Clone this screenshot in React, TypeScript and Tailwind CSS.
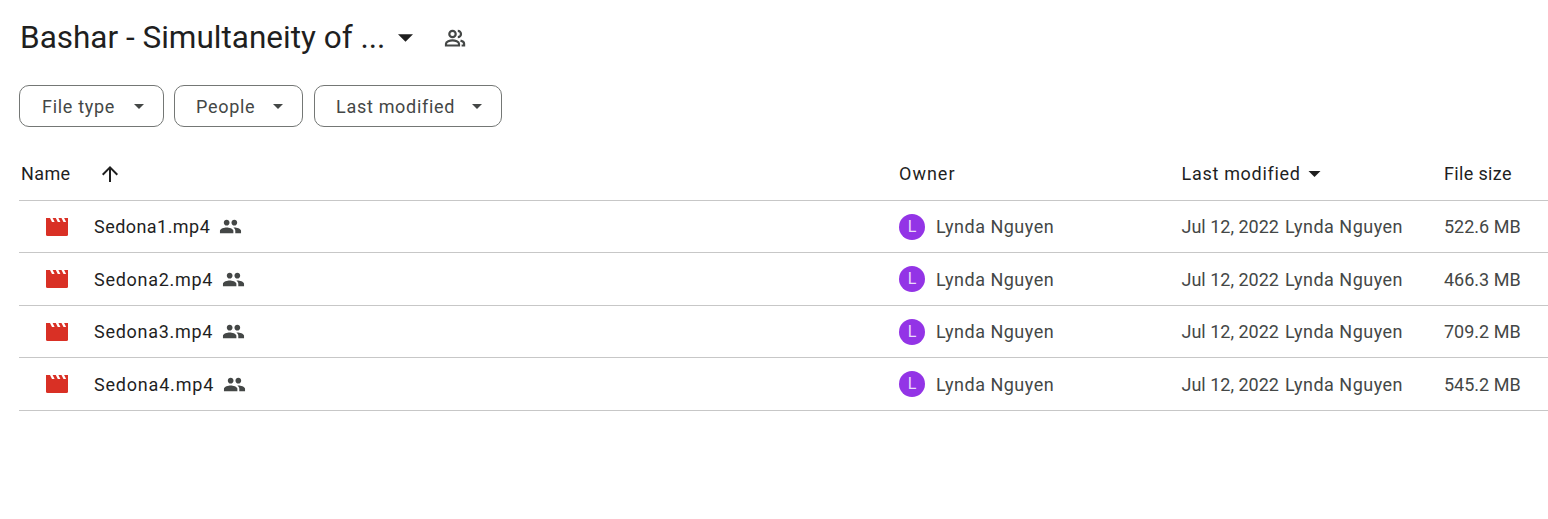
const files = [
  { name: "Sedona1.mp4", size: "522.6 MB", nameBox: "w-[116px] tracking-[0.45px]", rowHeight: "h-[52px]" },
  { name: "Sedona2.mp4", size: "466.3 MB", nameBox: "w-[119px] tracking-[0.72px]", rowHeight: "h-[53px]" },
  { name: "Sedona3.mp4", size: "709.2 MB", nameBox: "w-[119px] tracking-[0.72px]", rowHeight: "h-[52px]" },
  { name: "Sedona4.mp4", size: "545.2 MB", nameBox: "w-[120px] tracking-[0.8px]", rowHeight: "h-[53px]" },
];

const chips = [
  { label: "File type", box: "w-[145px] pl-[22px]" },
  { label: "People", box: "w-[129px] pl-[21px]" },
  { label: "Last modified", box: "w-[188px] pl-[21px]" },
];

function Caret({ className }: { className: string }) {
  return (
    <svg viewBox="0 0 12 6" className={className} fill="currentColor">
      <path d="M0 0h12L6 6z" />
    </svg>
  );
}

function SharedIcon() {
  return (
    <svg viewBox="0 0 24 24" className="w-[23px] h-[23px] text-[#444746] ml-[9px]" fill="currentColor">
      <path d="M16 11c1.66 0 2.99-1.34 2.99-3S17.66 5 16 5s-3 1.34-3 3 1.34 3 3 3zm-8 0c1.66 0 2.99-1.34 2.99-3S9.66 5 8 5 5 6.34 5 8s1.34 3 3 3zm0 2c-2.33 0-7 1.17-7 3.5V19h14v-2.5C15 14.17 10.33 13 8 13zm8 0c-.29 0-.62.02-.97.05 1.16.84 1.97 1.97 1.97 3.45V19h6v-2.5c0-2.33-4.67-3.5-7-3.5z" />
    </svg>
  );
}

function OutlinePeople() {
  return (
    <svg viewBox="0 0 24 24" className="w-[24px] h-[24px] text-[#444746]" fill="none" stroke="currentColor" strokeWidth="2.2">
      <circle cx="9.500" cy="8" r="3.200" />
      <path d="M3 19.500v-1.800c0-2 3.800-3.400 6.500-3.400s6.500 1.400 6.500 3.400v1.800z" />
      <path d="M14.800 4.800a3.200 3.200 0 0 1 0 6.400" />
      <path d="M17.500 14.600c2 .5 3.600 1.500 3.600 3.100v1.800h-2.500" />
    </svg>
  );
}

function VideoIcon() {
  return (
    <svg viewBox="0 0 22 18" className="w-[22px] h-[18px]">
      <path fill="#d93025" d="M0 0h22v16.500a1.500 1.500 0 0 1-1.500 1.500h-19A1.500 1.500 0 0 1 0 16.500z" />
      <path fill="#ffffff" d="M4 0h2.600l2 4H6zM9.800 0h2.600l2 4h-2.600zM15.500 0h2.600l2 4h-2.600z" />
    </svg>
  );
}

export default function App() {
  return (
    <div className="min-h-[519px] bg-white font-['Roboto',sans-serif] text-[#1f1f1f] pl-[19px] overflow-hidden">
      <div className="flex items-center h-[76px] pl-[1px]">
        <h1 className="text-[31.500px] font-normal leading-none whitespace-nowrap">Bashar - Simultaneity of ...</h1>
        <Caret className="w-[15px] h-[8px] ml-[13px] text-[#1f1f1f]" />
        <div className="ml-[30px]"><OutlinePeople /></div>
      </div>

      <div className="flex gap-[10px] mt-[9px]">
        {chips.map((c) => (
          <button key={c.label} className={`${c.box} h-[42px] shrink-0 flex items-center justify-between pr-[18px] border border-[#747775] rounded-[10px] text-[#444746] text-[18px] tracking-[0.7px] last:ml-[1px]`}>
            <span className="whitespace-nowrap">{c.label}</span>
            <Caret className="w-[12px] h-[5px] text-[#444746]" />
          </button>
        ))}
      </div>

      <div className="mt-[22px] grid grid-cols-[880px_282.500px_262.500px_1fr] h-[52px] pb-[2px] items-center border-b border-[#c7c7c7] text-[18px]">
        <div className="flex items-center pl-[2px]">
          <span className="tracking-[0.4px]">Name</span>
          <svg viewBox="0 0 24 24" className="w-[24px] h-[24px] ml-[27px] text-[#1f1f1f]" fill="currentColor">
            <path d="M4 12l1.410 1.410L11 7.830V20h2V7.830l5.580 5.590L20 12l-8-8-8 8z" />
          </svg>
        </div>
        <div className="tracking-[1px]">Owner</div>
        <div className="flex items-center">
          <span className="tracking-[0.7px]">Last modified</span>
          <Caret className="w-[13px] h-[6px] ml-[7px] text-[#1f1f1f]" />
        </div>
        <div className="tracking-[0.35px]">File size</div>
      </div>

      {files.map((f) => (
        <div key={f.name} className={`${f.rowHeight} grid grid-cols-[880px_282.500px_262.500px_1fr] items-center border-b border-[#c7c7c7] text-[18px] text-[#444746]`}>
          <div className="flex items-center pl-[27px]">
            <VideoIcon />
            <span className={`${f.nameBox} ml-[26px] text-[#1f1f1f] whitespace-nowrap`}>{f.name}</span>
            <SharedIcon />
          </div>
          <div className="flex items-center">
            <span className="w-[26px] h-[26px] rounded-full bg-[#9334e6] text-[#eadbfa] text-[16px] flex items-center justify-center">L</span>
            <span className="ml-[11px] tracking-[0.5px]">Lynda Nguyen</span>
          </div>
          <div className="flex items-center whitespace-nowrap">
            <span>Jul 12, 2022</span>
            <span className="ml-[6px] tracking-[0.5px]">Lynda Nguyen</span>
          </div>
          <div className="whitespace-nowrap">{f.size}</div>
        </div>
      ))}
    </div>
  );
}
